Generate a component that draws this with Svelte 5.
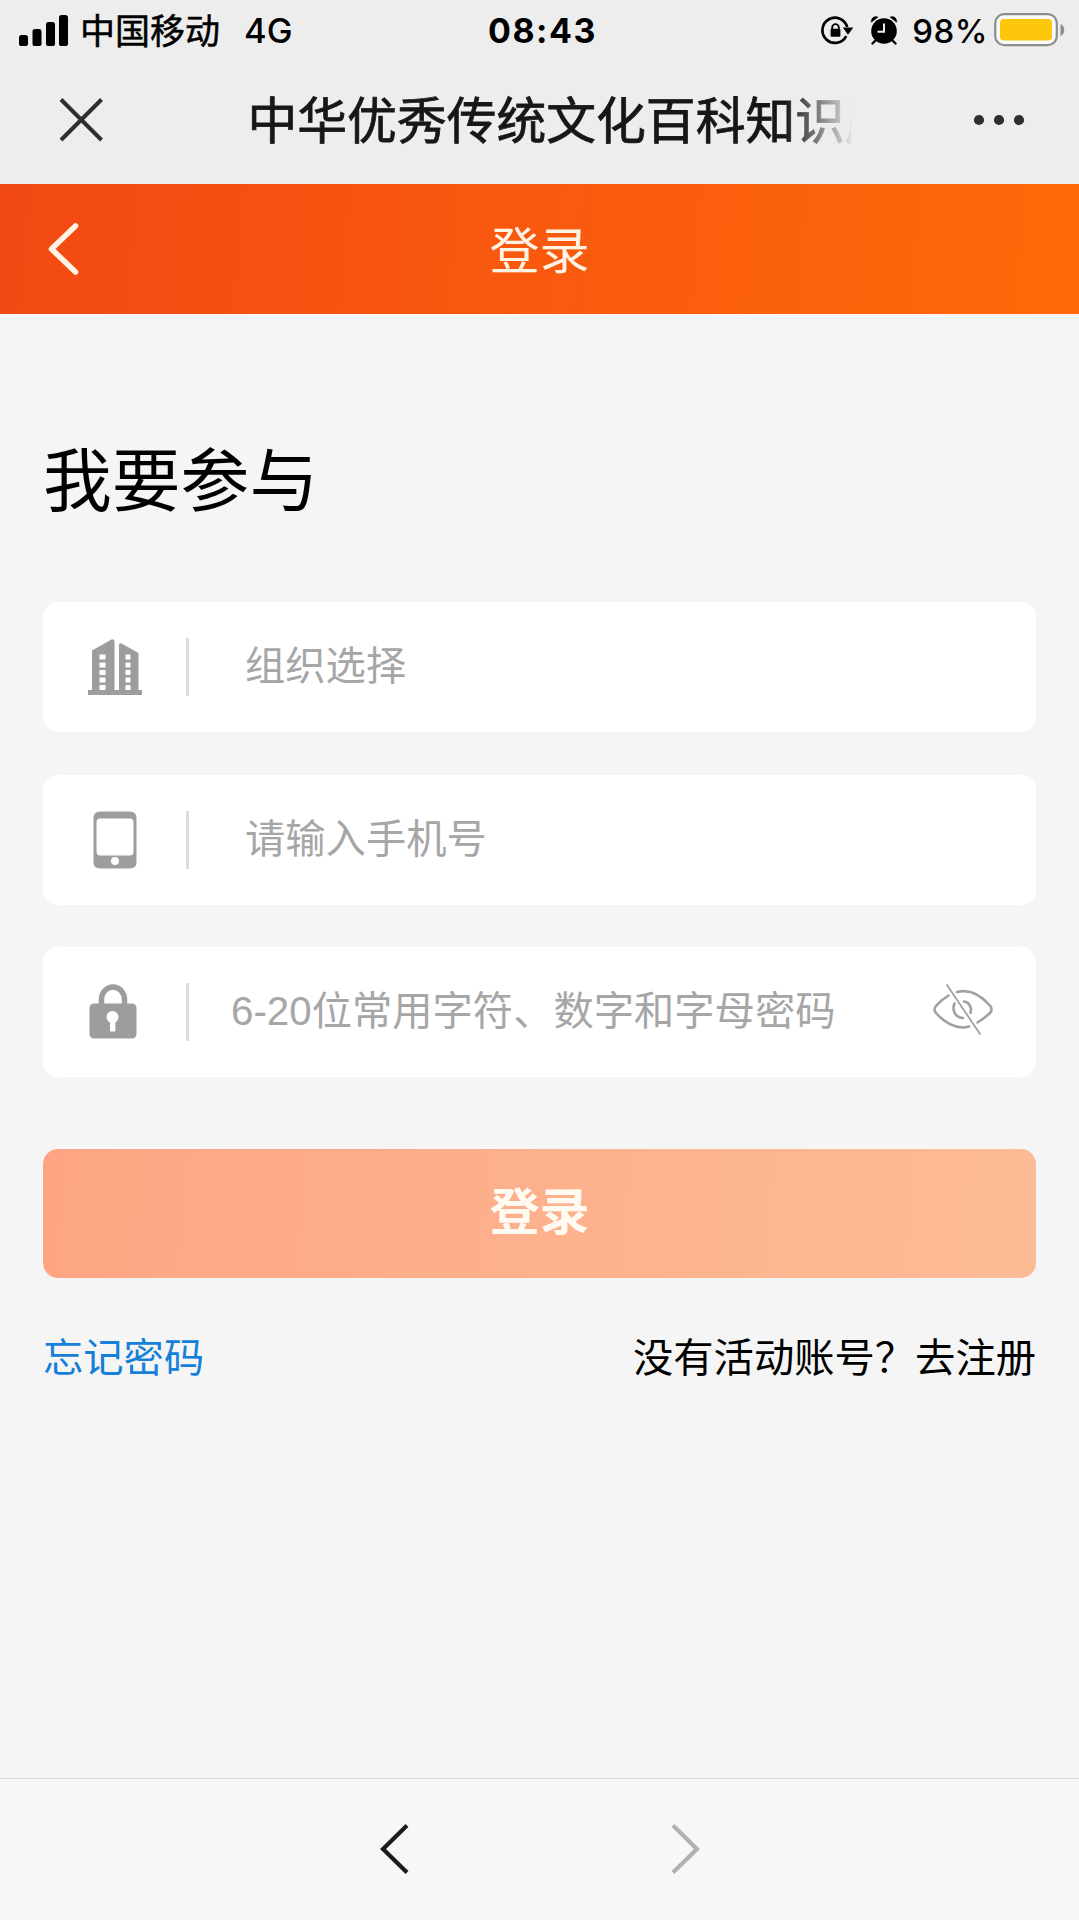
<script>
  let organisation = $state('');
  let phone = $state('');
  let password = $state('');
</script>

<div class="page">
  <div class="status">
    <div class="carrier">
      <svg class="signal" width="50" height="32" viewBox="0 0 50 32">
        <rect x="0" y="20" width="9" height="11" rx="2.6" />
        <rect x="13.5" y="14" width="9" height="17" rx="2.6" />
        <rect x="27" y="7" width="9" height="24" rx="2.6" />
        <rect x="40" y="0" width="9" height="31" rx="2.6" />
      </svg>
      <span class="operator">中国移动</span>
      <span class="network">4G</span>
    </div>
    <span class="time">08:43</span>
    <div class="indicators">
      <svg class="rotation" width="32" height="30" viewBox="0 0 32 30">
        <path d="M25.2 20.2A12.6 12.6 0 1 1 26.2 11" fill="none" stroke="#000" stroke-width="2.7" />
        <path d="M21.8 11.6h10.4l-5.2 7.2z" />
        <path d="M11.2 14.5v-3a3.3 3.3 0 0 1 6.6 0v3" fill="none" stroke="#000" stroke-width="1.8" />
        <rect x="9.6" y="12.8" width="9.8" height="8" rx="1" />
      </svg>
      <svg class="alarm" width="28" height="30" viewBox="0 0 28 30">
        <circle cx="14" cy="16" r="12.8" />
        <path d="M1 8.2C-.6 3.2 4.6-1.2 9 2zM27 8.2C28.6 3.2 23.4-1.2 19 2z" stroke="#ededed" stroke-width=".8" />
        <path d="M5.5 25.5L2.5 28.5M22.5 25.5L25.5 28.5" stroke="#000" stroke-width="2.4" stroke-linecap="round" />
        <path d="M14 8.5V16.800H7.5" fill="none" stroke="#ededed" stroke-width="2" />
      </svg>
      <span class="percent">98%</span>
      <svg class="battery" width="72" height="34" viewBox="0 0 72 34">
        <rect x="1.2" y="1.2" width="61.6" height="31" rx="9" fill="#fafafa" stroke="#8d8d8f" stroke-width="2.2" />
        <rect x="6" y="6" width="52" height="21.5" rx="4" fill="#fdc80c" />
        <path d="M66.500 11c5 2 5 10 0 12z" fill="#8d8d8f" />
      </svg>
    </div>
  </div>

  <div class="webbar">
    <svg class="close" width="44" height="44" viewBox="0 0 44 44">
      <path d="M2 1.500L42.500 42M42.500 1.500L2 42" fill="none" stroke="#2f2f2f" stroke-width="4" />
    </svg>
    <div class="title">中华优秀传统文化百科知识库</div>
    <svg class="more" width="52" height="12" viewBox="0 0 52 12">
      <circle cx="6" cy="6" r="5.1" /><circle cx="26" cy="6" r="5.1" /><circle cx="46" cy="6" r="5.1" />
    </svg>
  </div>

  <header>
    <svg class="back" width="34" height="56" viewBox="0 0 34 56">
      <path d="M29.500 5L5.500 28L29.500 51" fill="none" stroke="#fff3e4" stroke-width="5.6" stroke-linecap="round" stroke-linejoin="round" />
    </svg>
    <span>登录</span>
  </header>

  <main>
    <h1>我要参与</h1>
    <div class="field">
      <div class="icon">
        <svg width="54" height="56" viewBox="0 0 54 56" fill="#9d9d9d">
          <path fill-rule="evenodd" d="M0 51H4V11.500L23.500 .5Q26.500-.5 26.500 3V51H31V5.500Q32 3.500 34.500 5L50.500 14V51H54V56H0ZM11.500 15.500v5h6v-5zm0 8v5h6v-5zm0 7.500v5h6v-5zm0 7.500v5h6v-5zm0 7.500v5h6v-5zM37.500 15.500v5h5v-5zm0 8v5h5v-5zm0 7.500v5h5v-5zm0 7.500v5h5v-5zm0 7.500v5h5v-5z" />
        </svg>
      </div>
      <input type="text" placeholder="组织选择" readonly bind:value={organisation} />
    </div>
    <div class="field">
      <div class="icon">
        <svg width="44" height="58" viewBox="0 0 44 58">
          <path fill="#9d9d9d" fill-rule="evenodd" d="M7 .5H37Q43.500 .5 43.500 7V51Q43.500 57.500 37 57.500H7Q.5 57.500 .5 51V7Q.5 .5 7 .5ZM7 7.500Q3.500 7.500 3.500 11V40.500Q3.500 44.500 7 44.500H37Q40.500 44.500 40.500 40.500V11Q40.500 7.500 37 7.500ZM22 46a4 4 0 1 0 0 8a4 4 0 1 0 0-8z" />
        </svg>
      </div>
      <input type="text" placeholder="请输入手机号" bind:value={phone} />
    </div>
    <div class="field secret">
      <div class="icon">
        <svg width="48" height="56" viewBox="0 0 48 56">
          <path d="M12.500 24V16.500a11.500 12.500 0 0 1 23 0V24" fill="none" stroke="#9d9d9d" stroke-width="5.5" />
          <rect x=".5" y="20.500" width="47" height="35" rx="4.5" fill="#9d9d9d" />
          <circle cx="23.500" cy="34" r="6" fill="#fff" />
          <rect x="21" y="36" width="5.4" height="12.5" fill="#fff" />
        </svg>
      </div>
      <input type="text" placeholder="6-20位常用字符、数字和字母密码" bind:value={password} />
      <svg class="eye" width="60" height="54" viewBox="0 0 60 54">
        <g fill="none" stroke="#a1a1a1" stroke-width="2.6" stroke-linecap="round">
          <path d="M15.500 12.500Q8 17 3 23Q0 26.500 3 30Q15 43.500 29 44.500Q33 44.500 36 43.500" />
          <path d="M24 9Q41 4.500 57 22.500Q60 26.500 57 30Q51 35.500 44.500 39.500" />
          <path d="M21.500 20.500C19 26.500 21.500 34.500 30 35" />
          <path d="M31 18.500C36 19 39 24 37.500 30" />
          <path d="M14 2L47 51" stroke-width="1.8" />
        </g>
      </svg>
    </div>
    <button type="button">登录</button>
    <div class="links">
      <span class="forgot">忘记密码</span>
      <span>没有活动账号？去注册</span>
    </div>
  </main>

  <footer>
    <svg width="32" height="52" viewBox="0 0 32 52">
      <path d="M28 2.500L4 26L28 49.500" fill="none" stroke="#1b1b1b" stroke-width="4.2" />
    </svg>
    <svg width="32" height="52" viewBox="0 0 32 52">
      <path d="M4 2.500L28 26L4 49.500" fill="none" stroke="#b1b1b1" stroke-width="4.2" />
    </svg>
  </footer>
</div>

<style>
  :global(body) { margin: 0; background: #f5f5f5; }
  .page {
    width: 1079px; height: 1920px; display: flex; flex-direction: column; overflow: hidden;
    background: #f5f5f5; color: #000;
    font-family: "Liberation Sans", "Noto Sans CJK SC", sans-serif;
  }
  svg { display: block; flex: none; }
  .status {
    height: 60px; box-sizing: border-box; padding: 0 13px 0 19px; background: #ededed;
    display: grid; grid-template-columns: 1fr auto 1fr; align-items: center;
    white-space: nowrap;
  }
  .status span { line-height: 60px; }
  .carrier, .indicators { display: flex; align-items: center; }
  .indicators { justify-content: flex-end; }
  .signal { margin-bottom: 1px; }
  .operator { font-size: 35px; margin: 2px 0 0 11px; -webkit-text-stroke: .5px #000; }
  .network, .time, .percent { font-family: Inter, sans-serif; font-size: 33px; }
  .network { margin-left: 24px; font-size: 34.5px; font-weight: 500; }
  .time { font-weight: 700; font-size: 34px; letter-spacing: 1.5px; }
  .percent { font-weight: 500; letter-spacing: .5px; }
  .alarm { margin: 0 14px 2px 17px; }
  .battery { margin: 0 0 3px 6px; }
  .webbar {
    height: 124px; background: #ededed; display: flex; align-items: center; box-sizing: border-box;
    padding: 0 54px 5px 59px; justify-content: space-between;
  }
  .title {
    width: 603px; margin: 5px 0 0 22px; overflow: hidden; white-space: nowrap; line-height: 80px;
    font-size: 49.8px; color: #171717; -webkit-text-stroke: .8px #171717;
    mask-image: linear-gradient(to right, #000 537px, transparent 607px);
  }
  .more { fill: #2f2f2f; }
  header {
    height: 130px; box-sizing: border-box; display: grid; grid-template-columns: 1fr auto 1fr;
    align-items: center; padding: 0 46px;
    background: linear-gradient(95deg, #f24914, #ff6a09); color: #fff3e4;
    font-size: 50px; line-height: 124px;
  }
  header span { padding-top: 6px; }
  main { flex: 1; padding: 0 43px; }
  h1 { margin: 119px 0 69px; font-size: 68.8px; font-weight: 400; line-height: 100px; }
  .field {
    height: 130px; margin-bottom: 42.5px; border-radius: 15px; background: #fff;
    display: flex; align-items: center;
  }
  .icon {
    width: 146px; height: 58px; box-sizing: border-box; border-right: 3px solid #dcdcdc;
    display: flex; align-items: center; justify-content: center; flex: none;
  }
  input {
    flex: 1; min-width: 0; height: 80px; margin: 0 0 0 56px; padding: 0; border: 0; outline: 0;
    background: none; font-family: inherit; font-size: 40.3px; color: #333;
  }
  input::placeholder { color: #a6a6a6; opacity: 1; }
  .secret .icon svg { margin: 0 3px 3px 0; }
  .secret input { margin-left: 42px; }
  .eye { margin: 0 43px 4px 0; }
  button {
    display: block; width: 100%; height: 129px; margin-top: 72px; padding: 0 0 10px; border: 0;
    border-radius: 15px; background: linear-gradient(95deg, #fda583, #fdbc96);
    font: 700 50px/119px "Noto Sans CJK SC", sans-serif; color: #fffaf2;
  }
  .links {
    display: flex; justify-content: space-between; margin-top: 51px;
    font-size: 40.3px; line-height: 60px;
  }
  .forgot { color: #1680d8; }
  footer {
    height: 142px; box-sizing: border-box; padding-bottom: 2px; border-top: 1px solid #d9d9d9;
    background: #f7f7f7; display: flex; align-items: center; justify-content: center; gap: 258px;
  }
</style>
